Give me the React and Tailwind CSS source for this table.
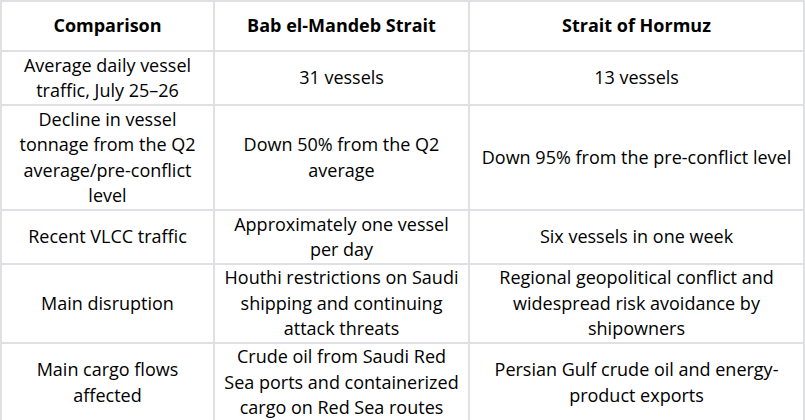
const rows = [
  {
    h: 'h-[54px]',
    a: 'Average daily vessel traffic, July 25–26',
    b: '31 vessels',
    c: '13 vessels',
  },
  {
    h: 'h-[105px]',
    a: 'Decline in vessel tonnage from the Q2 average/pre-conflict level',
    b: 'Down 50% from the Q2 average',
    c: 'Down 95% from the pre-conflict level',
  },
  {
    h: 'h-[54px]',
    a: 'Recent VLCC traffic',
    b: 'Approximately one vessel per day',
    c: 'Six vessels in one week',
  },
  {
    h: 'h-[78px]',
    a: 'Main disruption',
    b: 'Houthi restrictions on Saudi shipping and continuing attack threats',
    c: 'Regional geopolitical conflict and widespread risk avoidance by shipowners',
  },
  {
    h: 'h-[80px]',
    a: 'Main cargo flows affected',
    b: 'Crude oil from Saudi Red Sea ports and containerized cargo on Red Sea routes',
    c: 'Persian Gulf crude oil and energy-product exports',
  },
];

export default function App() {
  const cell = 'border-2 border-[#dfe0e4] px-1.5 text-center align-middle';
  return (
    <div className="w-[805px] h-[420px] bg-white overflow-hidden">
      <table
        className="w-[805px] table-fixed border-collapse text-[18px] leading-[25.5px] text-black"
        style={{ fontFamily: '"Open Sans", sans-serif' }}
      >
        <colgroup>
          <col className="w-[213px]" />
          <col className="w-[255px]" />
          <col />
        </colgroup>
        <thead>
          <tr className="h-[50px]">
            <th className={`${cell} font-bold`}>Comparison</th>
            <th className={`${cell} font-bold`}>Bab el-Mandeb Strait</th>
            <th className={`${cell} font-bold`}>Strait of Hormuz</th>
          </tr>
        </thead>
        <tbody>
          {rows.map((r, i) => (
            <tr key={i} className={r.h}>
              <td className={cell}>{r.a}</td>
              <td className={cell}>{r.b}</td>
              <td className={cell}>{r.c}</td>
            </tr>
          ))}
        </tbody>
      </table>
    </div>
  );
}
